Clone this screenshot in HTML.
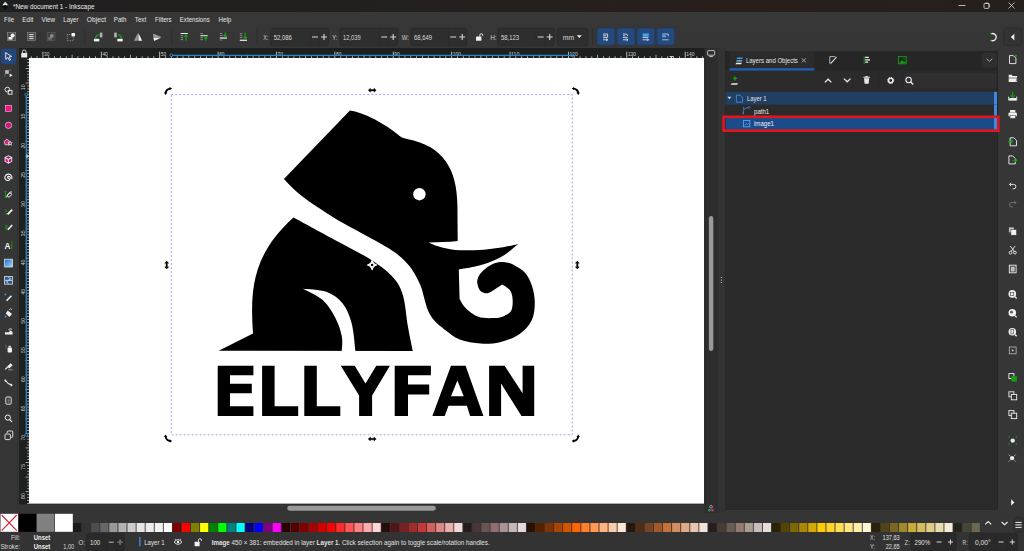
<!DOCTYPE html>
<html><head><meta charset="utf-8">
<style>
*{margin:0;padding:0}
html,body{width:1024px;height:551px;overflow:hidden;background:#363636;font-family:"Liberation Sans",sans-serif}
svg{position:absolute;left:0;top:0;display:block}
text{font-family:"Liberation Sans",sans-serif}
</style></head><body><svg width="1024" height="551" viewBox="0 0 1024 551" font-family="Liberation Sans, sans-serif"><defs><linearGradient id="tg" x1="0" x2="1" y1="0" y2="0"><stop offset="0" stop-color="#201f1f"/><stop offset="0.5" stop-color="#23201e"/><stop offset="0.72" stop-color="#281e1c"/><stop offset="1" stop-color="#24201e"/></linearGradient></defs><rect x="0" y="0" width="1024" height="12" fill="url(#tg)" rx="0" /><path d="M5.2,1.8 L9,5.6 L5.2,9.8 L1.6,5.6 Z" fill="#0a0a0a"/><path d="M5.2,1.8 L8.2,4.8 L6.6,5.4 L5.4,4.8 L3.6,5.6 L2.2,5.2 Z" fill="#e8e8e8"/><path d="M6.2,2.8 L9,5.6 L7.6,5.8 Z" fill="#5078b0"/><text x="12.9" y="8.9" font-size="7.4" fill="#eeeeee" text-anchor="start" font-weight="normal" textLength="81.6" lengthAdjust="spacingAndGlyphs" >*New document 1 - Inkscape</text><rect x="958.5" y="5.2" width="7" height="0.8" fill="#e0e0e0" rx="0" /><rect x="984" y="3.4" width="5" height="5" rx="1" fill="none" stroke="#e0e0e0" stroke-width="0.8"/><path d="M985.5,3.2 h2.5 a1.2,1.2 0 0 1 1.2,1.2 v2.5" fill="none" stroke="#e0e0e0" stroke-width="0.8"/><path d="M1008.5,2.5 L1014.5,8.5 M1014.5,2.5 L1008.5,8.5" stroke="#e0e0e0" stroke-width="0.8"/><rect x="0" y="12" width="1024" height="36" fill="#363636" rx="0" /><rect x="0" y="12" width="1024" height="13" fill="#373737" rx="0" /><text x="4.1" y="21.6" font-size="7.5" fill="#e6e6e6" text-anchor="start" font-weight="normal" textLength="10.0" lengthAdjust="spacingAndGlyphs" >File</text><text x="22.3" y="21.6" font-size="7.5" fill="#e6e6e6" text-anchor="start" font-weight="normal" textLength="11.1" lengthAdjust="spacingAndGlyphs" >Edit</text><text x="41.6" y="21.6" font-size="7.5" fill="#e6e6e6" text-anchor="start" font-weight="normal" textLength="13.5" lengthAdjust="spacingAndGlyphs" >View</text><text x="63.3" y="21.6" font-size="7.5" fill="#e6e6e6" text-anchor="start" font-weight="normal" textLength="15.2" lengthAdjust="spacingAndGlyphs" >Layer</text><text x="86.8" y="21.6" font-size="7.5" fill="#e6e6e6" text-anchor="start" font-weight="normal" textLength="19.3" lengthAdjust="spacingAndGlyphs" >Object</text><text x="113.8" y="21.6" font-size="7.5" fill="#e6e6e6" text-anchor="start" font-weight="normal" textLength="12.7" lengthAdjust="spacingAndGlyphs" >Path</text><text x="134.8" y="21.6" font-size="7.5" fill="#e6e6e6" text-anchor="start" font-weight="normal" textLength="11.4" lengthAdjust="spacingAndGlyphs" >Text</text><text x="155.1" y="21.6" font-size="7.5" fill="#e6e6e6" text-anchor="start" font-weight="normal" textLength="16.5" lengthAdjust="spacingAndGlyphs" >Filters</text><text x="179.8" y="21.6" font-size="7.5" fill="#e6e6e6" text-anchor="start" font-weight="normal" textLength="29.9" lengthAdjust="spacingAndGlyphs" >Extensions</text><text x="218.5" y="21.6" font-size="7.5" fill="#e6e6e6" text-anchor="start" font-weight="normal" textLength="12.7" lengthAdjust="spacingAndGlyphs" >Help</text><rect x="84.4" y="29" width="0.7" height="16" fill="#2c2c2c" rx="0" /><rect x="171.4" y="29" width="0.7" height="16" fill="#2c2c2c" rx="0" /><rect x="256.6" y="29" width="0.7" height="16" fill="#2c2c2c" rx="0" /><rect x="592.4" y="29" width="0.7" height="16" fill="#2c2c2c" rx="0" /><rect x="7.3" y="32.5" width="8.4" height="8" fill="#4a4a4a" stroke="#8a8a8a" stroke-width="0.6"/><circle cx="12.6" cy="35.6" r="2" fill="#f0f0f0"/><rect x="8.5" y="37" width="4" height="2.6" fill="#f0f0f0"/><rect x="27.3" y="32.5" width="8.4" height="8" fill="#4a4a4a" stroke="#8a8a8a" stroke-width="0.6"/><path d="M29.2,34.6 h4.4 M29.2,36.6 h4.4 M29.2,38.6 h4.4" stroke="#f0f0f0" stroke-width="0.9"/><rect x="47.2" y="32.5" width="7.8" height="8" fill="#3e3e3e" stroke="#606060" stroke-width="0.6"/><circle cx="51.8" cy="35.8" r="1.9" fill="#8a8a8a"/><rect x="48.3" y="37.2" width="3.5" height="2.4" fill="#7a7a7a"/><rect x="67.3" y="34.5" width="6" height="6.2" fill="none" stroke="#bdbdbd" stroke-width="0.6" stroke-dasharray="1,0.8"/><rect x="71.6" y="33" width="3.4" height="3.4" fill="#f2f2f2"/><path d="M95.6,38.4 a3.4,3.4 0 0 1 3.4,-3.4" fill="none" stroke="#10a010" stroke-width="1.7"/><rect x="99.8" y="32.6" width="2.6" height="4.8" fill="#b0b0b0"/><rect x="93.9" y="38.8" width="5.4" height="2.6" fill="#f0f0f0"/><path d="M121.4,38.4 a3.4,3.4 0 0 0 -3.4,-3.4" fill="none" stroke="#10a010" stroke-width="1.7"/><rect x="114.2" y="32.6" width="2.6" height="4.8" fill="#b0b0b0"/><rect x="117.3" y="38.8" width="5.4" height="2.6" fill="#f0f0f0"/><path d="M137.8,33 L134,40.8 H137.8 Z" fill="#9a9a9a"/><path d="M138.4,33 L142.2,40.8 H138.4 Z" fill="#f0f0f0"/><path d="M153.2,33.6 L161.4,37 L153.2,37 Z" fill="#9a9a9a"/><path d="M153.2,37.6 L161.4,37.6 L154.2,41 Z" fill="#f0f0f0"/><rect x="180.6" y="33" width="7.2" height="1" fill="#f0f0f0" rx="0" /><rect x="180.6" y="35.3" width="2.6" height="0.8" fill="#9a9a9a" rx="0" /><rect x="180.6" y="37.3" width="2.6" height="0.8" fill="#9a9a9a" rx="0" /><rect x="180.6" y="39.3" width="2.6" height="0.8" fill="#9a9a9a" rx="0" /><path d="M186.0,40.8 V35.3 M184.4,36.8 L186.0,35 L187.6,36.8" stroke="#10a010" stroke-width="1.2" fill="none"/><rect x="200.4" y="33" width="2.6" height="0.8" fill="#9a9a9a" rx="0" /><rect x="200.4" y="35.2" width="7.2" height="1" fill="#f0f0f0" rx="0" /><rect x="200.4" y="37.3" width="2.6" height="0.8" fill="#9a9a9a" rx="0" /><rect x="200.4" y="39.3" width="2.6" height="0.8" fill="#9a9a9a" rx="0" /><path d="M205.8,40.8 V37 M204.20000000000002,38.5 L205.8,36.8 L207.4,38.5" stroke="#10a010" stroke-width="1.2" fill="none"/><rect x="219.8" y="33" width="2.6" height="0.8" fill="#9a9a9a" rx="0" /><rect x="219.8" y="35" width="2.6" height="0.8" fill="#9a9a9a" rx="0" /><rect x="219.8" y="37.4" width="7.2" height="1.2" fill="#f0f0f0" rx="0" /><rect x="219.8" y="39.6" width="2.6" height="0.8" fill="#9a9a9a" rx="0" /><path d="M225.20000000000002,32.5 V36.6 M223.60000000000002,35 L225.20000000000002,36.8 L226.8,35" stroke="#10a010" stroke-width="1.2" fill="none"/><rect x="239.8" y="33" width="2.6" height="0.8" fill="#9a9a9a" rx="0" /><rect x="239.8" y="35" width="2.6" height="0.8" fill="#9a9a9a" rx="0" /><rect x="239.8" y="37" width="2.6" height="0.8" fill="#9a9a9a" rx="0" /><rect x="239.8" y="39.6" width="7.2" height="1.4" fill="#d8d8d8" rx="0" /><path d="M245.20000000000002,32.5 V38.6 M243.60000000000002,37 L245.20000000000002,38.8 L246.8,37" stroke="#10a010" stroke-width="1.2" fill="none"/><text x="263.3" y="39.8" font-size="6.8" fill="#d0d0d0" text-anchor="start" font-weight="normal" textLength="5" lengthAdjust="spacingAndGlyphs" >X:</text><rect x="270.3" y="28.1" width="58.3" height="17.7" fill="#2e2e2e" rx="2.5" stroke="#282828" stroke-width="0.6"/><rect x="310.0" y="28.4" width="0.6" height="17.1" fill="#282828" rx="0" /><rect x="319.0" y="28.4" width="0.6" height="17.1" fill="#2a2a2a" rx="0" /><text x="273.7" y="39.8" font-size="6.8" fill="#dcdcdc" text-anchor="start" font-weight="normal" textLength="18.2" lengthAdjust="spacingAndGlyphs" >52,086</text><path d="M312.0,37 h6 M321.0,37 h6 M324.0,34 v6" stroke="#d8d8d8" stroke-width="1.1"/><text x="332.3" y="39.8" font-size="6.8" fill="#d0d0d0" text-anchor="start" font-weight="normal" textLength="5" lengthAdjust="spacingAndGlyphs" >Y:</text><rect x="339.7" y="28.1" width="58.1" height="17.7" fill="#2e2e2e" rx="2.5" stroke="#282828" stroke-width="0.6"/><rect x="379.2" y="28.4" width="0.6" height="17.1" fill="#282828" rx="0" /><rect x="388.2" y="28.4" width="0.6" height="17.1" fill="#2a2a2a" rx="0" /><text x="343.09999999999997" y="39.8" font-size="6.8" fill="#dcdcdc" text-anchor="start" font-weight="normal" textLength="17.5" lengthAdjust="spacingAndGlyphs" >12,039</text><path d="M381.2,37 h6 M390.2,37 h6 M393.2,34 v6" stroke="#d8d8d8" stroke-width="1.1"/><text x="401.8" y="39.8" font-size="6.8" fill="#d0d0d0" text-anchor="start" font-weight="normal" textLength="7.2" lengthAdjust="spacingAndGlyphs" >W:</text><rect x="410.7" y="28.1" width="56.1" height="17.7" fill="#2e2e2e" rx="2.5" stroke="#282828" stroke-width="0.6"/><rect x="448.2" y="28.4" width="0.6" height="17.1" fill="#282828" rx="0" /><rect x="457.2" y="28.4" width="0.6" height="17.1" fill="#2a2a2a" rx="0" /><text x="414.09999999999997" y="39.8" font-size="6.8" fill="#dcdcdc" text-anchor="start" font-weight="normal" textLength="18" lengthAdjust="spacingAndGlyphs" >68,649</text><path d="M450.2,37 h6 M459.2,37 h6 M462.2,34 v6" stroke="#d8d8d8" stroke-width="1.1"/><text x="490.2" y="39.8" font-size="6.8" fill="#d0d0d0" text-anchor="start" font-weight="normal" textLength="6.5" lengthAdjust="spacingAndGlyphs" >H:</text><rect x="497.7" y="28.1" width="56.6" height="17.7" fill="#2e2e2e" rx="2.5" stroke="#282828" stroke-width="0.6"/><rect x="535.6999999999999" y="28.4" width="0.6" height="17.1" fill="#282828" rx="0" /><rect x="544.6999999999999" y="28.4" width="0.6" height="17.1" fill="#2a2a2a" rx="0" /><text x="501.09999999999997" y="39.8" font-size="6.8" fill="#dcdcdc" text-anchor="start" font-weight="normal" textLength="17.9" lengthAdjust="spacingAndGlyphs" >58,123</text><path d="M537.6999999999999,37 h6 M546.6999999999999,37 h6 M549.6999999999999,34 v6" stroke="#d8d8d8" stroke-width="1.1"/><rect x="476" y="36.6" width="5.4" height="4.2" rx="0.5" fill="#f0f0f0"/><path d="M479.8,36.8 V35.2 a1.5,1.5 0 0 1 3,0 V36" fill="none" stroke="#f0f0f0" stroke-width="0.9"/><rect x="557.2" y="28.1" width="30.7" height="17.7" fill="#2e2e2e" rx="2.5" stroke="#282828" stroke-width="0.6"/><text x="562.8" y="40" font-size="6.8" fill="#d8d8d8" text-anchor="start" font-weight="normal" >mm</text><path d="M576.8,35.2 h5 l-2.5,2.8 z" fill="#f0f0f0"/><rect x="597" y="28.1" width="17.9" height="17" fill="#24497c" rx="2.8" stroke="#1c3a62" stroke-width="0.5"/><rect x="617" y="28.1" width="17.9" height="17" fill="#24497c" rx="2.8" stroke="#1c3a62" stroke-width="0.5"/><rect x="637" y="28.1" width="17.9" height="17" fill="#24497c" rx="2.8" stroke="#1c3a62" stroke-width="0.5"/><rect x="656.7" y="28.1" width="17.9" height="17" fill="#24497c" rx="2.8" stroke="#1c3a62" stroke-width="0.5"/><path d="M603,34 h4.6 v3.4 M603,35.8 h3.2 M603,37.6 h4.6 M603,39.8 h5 M607.6,39.8 l-1.4,-1 M607.6,39.8 l-1.4,1" stroke="#f0f0f0" stroke-width="0.8" fill="none"/><path d="M623,34 h2.6 a2.2,2.2 0 0 1 2.2,2.2 M623,35.8 h2.2 M623,37.6 h4.6 M623,39.8 h5 M628,39.8 l-1.4,-1 M628,39.8 l-1.4,1" stroke="#f0f0f0" stroke-width="0.8" fill="none"/><rect x="642.6" y="33.4" width="6.2" height="3.4" fill="#3ea0f0"/><path d="M642.6,37.6 h5.8 M642.6,39.8 h6 M648.6,39.8 l-1.4,-1 M648.6,39.8 l-1.4,1" stroke="#f0f0f0" stroke-width="0.8" fill="none"/><path d="M662.2,34 h6 v2.4 M662.2,36.4 h4 M662.2,39.8 h6.4" stroke="#d0e0f0" stroke-width="0.8" fill="none"/><rect x="662.2" y="34.8" width="3" height="2.6" fill="#3ea0f0"/><path d="M991.2,33.8 a3.6,3.6 0 1 1 0,6.6" fill="none" stroke="#f0f0f0" stroke-width="1.3"/><circle cx="990.6" cy="33.4" r="0.8" fill="#10a010"/><circle cx="990.6" cy="40.6" r="0.8" fill="#10a010"/><rect x="1003.7" y="28.1" width="18" height="17.3" fill="#333333" rx="2.5" stroke="#2a2a2a" stroke-width="0.7"/><path d="M1014.4,33.8 v6.6 l-3.6,-3.3 z" fill="#f0f0f0"/><rect x="0" y="48" width="18" height="465" fill="#363636" rx="0" /><rect x="0.8" y="48.7" width="15.4" height="15.3" fill="#23477a" rx="2.5" /><path d="M5.6,52.6 L11.6,56.4 L9,57 L10.6,59.8 L9.4,60.4 L7.8,57.6 L5.8,59.4 Z" fill="none" stroke="#f4f4f4" stroke-width="0.9" stroke-linejoin="round"/><rect x="5.2" y="70.2" width="3.6" height="3.6" fill="#bdbdbd"/><path d="M5,76.4 V74 M9,70 H11.6" stroke="#bdbdbd" stroke-width="0.6" stroke-dasharray="0.8,0.6"/><path d="M9.6,73.4 L12.6,75.2 L9.6,77 Z" fill="#f0f0f0"/><circle cx="7.4" cy="89.6" r="2.4" fill="none" stroke="#f0f0f0" stroke-width="0.9"/><rect x="8.2" y="90.4" width="3.8" height="3.8" fill="none" stroke="#f0f0f0" stroke-width="0.9"/><rect x="5.4" y="105.3" width="6.2" height="6.1" fill="#ff0a8c" rx="0" stroke="#e8e8e8" stroke-width="0.5"/><circle cx="8.5" cy="125.3" r="3.2" fill="#c8187c" stroke="#e8e8e8" stroke-width="0.6"/><path d="M6.8,139.2 L9.4,141 L8.6,144.6 L5,144.8 L4.2,141.4 Z" fill="#d0207a" stroke="#f0f0f0" stroke-width="0.7"/><path d="M10.2,140.6 L11,142.4 L12.8,142.6 L11.4,143.8 L11.8,145.8 L10.2,144.8 L8.4,145.8 L8.8,143.8 L7.4,142.6 L9.4,142.4 Z" fill="#f2f2f2"/><circle cx="10.1" cy="143.4" r="0.9" fill="#902050"/><path d="M8.4,155.2 L12.2,157.3 V161.6 L8.4,163.7 L4.6,161.6 V157.3 Z" fill="#f0f0f0"/><path d="M8.4,156.2 L10.8,157.5 L8.4,158.8 L6,157.5 Z" fill="#6a2848"/><path d="M5.4,158.3 L8,159.7 V162.6 L5.4,161.2 Z" fill="#ff10a0"/><path d="M8.8,159.7 L11.4,158.3 V161.2 L8.8,162.6 Z" fill="#b01868"/><path d="M9.2,178.2 a1.1,1.1 0 0 1 -1.6,-1.4 a1.6,1.6 0 0 1 2.6,0.6 a2.6,2.6 0 0 1 -3.2,3 a3.4,3.4 0 0 1 -1.8,-4.4 a3.6,3.6 0 0 1 6.6,0.6 v2.6" fill="none" stroke="#f0f0f0" stroke-width="1.1"/><path d="M6.4,197.4 C8,193 10.5,191.5 12,192" fill="none" stroke="#f0f0f0" stroke-width="1"/><ellipse cx="9.5" cy="195" rx="2.4" ry="1.5" transform="rotate(-45 9.5 195)" fill="none" stroke="#f0f0f0" stroke-width="0.9"/><path d="M5.4,191.4 V198" stroke="#10a010" stroke-width="0.9"/><circle cx="5.4" cy="191.6" r="0.9" fill="#10a010"/><circle cx="5.6" cy="197.2" r="0.9" fill="#10a010"/><path d="M7.6,214.4 L12.2,209.6" stroke="#f0f0f0" stroke-width="1.8"/><path d="M5,209.6 L6.8,210.4 M5.4,212.4 L7,211 M6,215 L6.6,213" stroke="#10a010" stroke-width="1"/><path d="M7.8,229.8 L12.2,225" stroke="#f0f0f0" stroke-width="1.6"/><path d="M5.2,225.6 L7.4,225.6 L5.4,228 L7.6,228.2 L5.6,230.4" fill="none" stroke="#10a010" stroke-width="0.9"/><text x="4.4" y="248.6" font-size="8.2" fill="#f4f4f4" text-anchor="start" font-weight="bold" >A</text><rect x="11.4" y="241.2" width="0.9" height="7.8" fill="#10a010" rx="0" /><defs><linearGradient id="gr" x1="0" y1="0" x2="1" y2="1"><stop offset="0" stop-color="#1a6fd0"/><stop offset="1" stop-color="#9fd6ff"/></linearGradient></defs><rect x="4.6" y="259.2" width="7.8" height="7.8" fill="url(#gr)" stroke="#e0e0e0" stroke-width="0.8"/><rect x="4.6" y="276.4" width="7.8" height="7.8" fill="#2b5c90" stroke="#e0e0e0" stroke-width="0.8"/><path d="M8.5,277 L10.5,279 L8.5,280.3 L6.5,282 L8.5,283.6 M5,280.3 L12,280.3" stroke="#e8f4ff" stroke-width="0.8" fill="none"/><path d="M6.6,300.8 L11.4,295.8" stroke="#f0f0f0" stroke-width="1.6"/><circle cx="5.4" cy="294.6" r="1" fill="#2a8fe0"/><path d="M7.8,310.6 L12,314 L9.4,317 L5.8,313.6 Z" fill="#f0f0f0"/><path d="M9,310 L10.8,308.6 L12,310" fill="none" stroke="#f0f0f0" stroke-width="0.7"/><circle cx="5.6" cy="316.6" r="1.1" fill="#2a8fe0"/><path d="M5,334.6 h7.6 v-2.4 c-1,-1.6 -2.6,-2 -3.8,-1.4 c1,0 1.4,1.4 -0.4,1.4 h-3.4 Z" fill="#f0f0f0"/><path d="M8.4,330 c1,-1.6 2.6,-1.4 3.8,-0.6" stroke="#f0f0f0" stroke-width="0.8" fill="none"/><rect x="7.6" y="347.4" width="4.4" height="5.2" rx="0.8" fill="#f0f0f0"/><rect x="8.6" y="345.8" width="2.2" height="1.6" fill="#f0f0f0"/><path d="M5,345.2 h0.6 M6.2,346.4 h0.6 M5,347.6 h0.6" stroke="#bdbdbd" stroke-width="0.6"/><path d="M7.2,366.6 L10.6,363.2 L12.6,365.2 L9.2,368.6 Z" fill="#f0f0f0"/><path d="M5.2,369.4 L7.6,367" stroke="#f0f0f0" stroke-width="1.2"/><path d="M8,369.8 h4.6" stroke="#bdbdbd" stroke-width="0.7"/><path d="M5.2,380.4 L8.6,383.8 L11.8,385" stroke="#f0f0f0" stroke-width="1.1" fill="none"/><circle cx="5.4" cy="380.6" r="1" fill="#f0f0f0"/><path d="M10.6,383.2 L12.8,385.2 L10.6,386.8 Z" fill="#f0f0f0"/><rect x="5.8" y="397" width="5.4" height="7.2" rx="1" fill="none" stroke="#f0f0f0" stroke-width="0.9"/><path d="M7.6,399 h2 M7.6,400.6 h2 M7.6,402.2 h2" stroke="#bdbdbd" stroke-width="0.6"/><circle cx="7.8" cy="417.6" r="2.6" fill="none" stroke="#f0f0f0" stroke-width="1"/><path d="M9.8,419.6 L12,421.8" stroke="#f0f0f0" stroke-width="1.2"/><rect x="5" y="434" width="5.4" height="5.6" rx="1" fill="#363636" stroke="#f0f0f0" stroke-width="0.9"/><path d="M7.2,433 v-1 a1,1 0 0 1 1,-1 h3.6 a1,1 0 0 1 1,1 v4.4 a1,1 0 0 1 -1,1 h-1.2" fill="none" stroke="#f0f0f0" stroke-width="0.9"/><rect x="17.6" y="48" width="0.6" height="465" fill="#2a2a2a" rx="0" /><rect x="18" y="48" width="707" height="465" fill="#353535" rx="0" /><rect x="19" y="503.6" width="686" height="0.8" fill="#262626" rx="0" /><rect x="19" y="48" width="686" height="10" fill="#1e1f1f" rx="0" /><rect x="19" y="58" width="10" height="446" fill="#1e1f1f" rx="0" /><rect x="29" y="58" width="675.5" height="445.6" fill="#ffffff" rx="0" /><rect x="30.82" y="56.2" width="0.8" height="1.8" fill="#c8c8c8" rx="0" /><rect x="36.66" y="56.2" width="0.8" height="1.8" fill="#c8c8c8" rx="0" /><rect x="42.50" y="51.7" width="0.8" height="6.3" fill="#d8d8d8" rx="0" /><text x="44.00" y="55.5" font-size="5.4" fill="#cfcfcf" text-anchor="start" font-weight="normal" textLength="5.4" lengthAdjust="spacingAndGlyphs" >30</text><rect x="48.34" y="56.2" width="0.8" height="1.8" fill="#c8c8c8" rx="0" /><rect x="54.18" y="56.2" width="0.8" height="1.8" fill="#c8c8c8" rx="0" /><rect x="60.02" y="56.2" width="0.8" height="1.8" fill="#c8c8c8" rx="0" /><rect x="65.86" y="56.2" width="0.8" height="1.8" fill="#c8c8c8" rx="0" /><rect x="71.69" y="54.8" width="0.8" height="3.2" fill="#c8c8c8" rx="0" /><rect x="77.53" y="56.2" width="0.8" height="1.8" fill="#c8c8c8" rx="0" /><rect x="83.37" y="56.2" width="0.8" height="1.8" fill="#c8c8c8" rx="0" /><rect x="89.21" y="56.2" width="0.8" height="1.8" fill="#c8c8c8" rx="0" /><rect x="95.05" y="56.2" width="0.8" height="1.8" fill="#c8c8c8" rx="0" /><rect x="100.89" y="51.7" width="0.8" height="6.3" fill="#d8d8d8" rx="0" /><text x="102.39" y="55.5" font-size="5.4" fill="#cfcfcf" text-anchor="start" font-weight="normal" textLength="5.4" lengthAdjust="spacingAndGlyphs" >40</text><rect x="106.73" y="56.2" width="0.8" height="1.8" fill="#c8c8c8" rx="0" /><rect x="112.57" y="56.2" width="0.8" height="1.8" fill="#c8c8c8" rx="0" /><rect x="118.41" y="56.2" width="0.8" height="1.8" fill="#c8c8c8" rx="0" /><rect x="124.25" y="56.2" width="0.8" height="1.8" fill="#c8c8c8" rx="0" /><rect x="130.09" y="54.8" width="0.8" height="3.2" fill="#c8c8c8" rx="0" /><rect x="135.92" y="56.2" width="0.8" height="1.8" fill="#c8c8c8" rx="0" /><rect x="141.76" y="56.2" width="0.8" height="1.8" fill="#c8c8c8" rx="0" /><rect x="147.60" y="56.2" width="0.8" height="1.8" fill="#c8c8c8" rx="0" /><rect x="153.44" y="56.2" width="0.8" height="1.8" fill="#c8c8c8" rx="0" /><rect x="159.28" y="51.7" width="0.8" height="6.3" fill="#d8d8d8" rx="0" /><text x="160.78" y="55.5" font-size="5.4" fill="#cfcfcf" text-anchor="start" font-weight="normal" textLength="5.4" lengthAdjust="spacingAndGlyphs" >50</text><rect x="165.12" y="56.2" width="0.8" height="1.8" fill="#c8c8c8" rx="0" /><rect x="170.96" y="56.2" width="0.8" height="1.8" fill="#c8c8c8" rx="0" /><rect x="176.80" y="56.2" width="0.8" height="1.8" fill="#c8c8c8" rx="0" /><rect x="182.64" y="56.2" width="0.8" height="1.8" fill="#c8c8c8" rx="0" /><rect x="188.48" y="54.8" width="0.8" height="3.2" fill="#c8c8c8" rx="0" /><rect x="194.31" y="56.2" width="0.8" height="1.8" fill="#c8c8c8" rx="0" /><rect x="200.15" y="56.2" width="0.8" height="1.8" fill="#c8c8c8" rx="0" /><rect x="205.99" y="56.2" width="0.8" height="1.8" fill="#c8c8c8" rx="0" /><rect x="211.83" y="56.2" width="0.8" height="1.8" fill="#c8c8c8" rx="0" /><rect x="217.67" y="51.7" width="0.8" height="6.3" fill="#d8d8d8" rx="0" /><text x="219.17" y="55.5" font-size="5.4" fill="#cfcfcf" text-anchor="start" font-weight="normal" textLength="5.4" lengthAdjust="spacingAndGlyphs" >60</text><rect x="223.51" y="56.2" width="0.8" height="1.8" fill="#c8c8c8" rx="0" /><rect x="229.35" y="56.2" width="0.8" height="1.8" fill="#c8c8c8" rx="0" /><rect x="235.19" y="56.2" width="0.8" height="1.8" fill="#c8c8c8" rx="0" /><rect x="241.03" y="56.2" width="0.8" height="1.8" fill="#c8c8c8" rx="0" /><rect x="246.87" y="54.8" width="0.8" height="3.2" fill="#c8c8c8" rx="0" /><rect x="252.70" y="56.2" width="0.8" height="1.8" fill="#c8c8c8" rx="0" /><rect x="258.54" y="56.2" width="0.8" height="1.8" fill="#c8c8c8" rx="0" /><rect x="264.38" y="56.2" width="0.8" height="1.8" fill="#c8c8c8" rx="0" /><rect x="270.22" y="56.2" width="0.8" height="1.8" fill="#c8c8c8" rx="0" /><rect x="276.06" y="51.7" width="0.8" height="6.3" fill="#d8d8d8" rx="0" /><text x="277.56" y="55.5" font-size="5.4" fill="#cfcfcf" text-anchor="start" font-weight="normal" textLength="5.4" lengthAdjust="spacingAndGlyphs" >70</text><rect x="281.90" y="56.2" width="0.8" height="1.8" fill="#c8c8c8" rx="0" /><rect x="287.74" y="56.2" width="0.8" height="1.8" fill="#c8c8c8" rx="0" /><rect x="293.58" y="56.2" width="0.8" height="1.8" fill="#c8c8c8" rx="0" /><rect x="299.42" y="56.2" width="0.8" height="1.8" fill="#c8c8c8" rx="0" /><rect x="305.25" y="54.8" width="0.8" height="3.2" fill="#c8c8c8" rx="0" /><rect x="311.09" y="56.2" width="0.8" height="1.8" fill="#c8c8c8" rx="0" /><rect x="316.93" y="56.2" width="0.8" height="1.8" fill="#c8c8c8" rx="0" /><rect x="322.77" y="56.2" width="0.8" height="1.8" fill="#c8c8c8" rx="0" /><rect x="328.61" y="56.2" width="0.8" height="1.8" fill="#c8c8c8" rx="0" /><rect x="334.45" y="51.7" width="0.8" height="6.3" fill="#d8d8d8" rx="0" /><text x="335.95" y="55.5" font-size="5.4" fill="#cfcfcf" text-anchor="start" font-weight="normal" textLength="5.4" lengthAdjust="spacingAndGlyphs" >80</text><rect x="340.29" y="56.2" width="0.8" height="1.8" fill="#c8c8c8" rx="0" /><rect x="346.13" y="56.2" width="0.8" height="1.8" fill="#c8c8c8" rx="0" /><rect x="351.97" y="56.2" width="0.8" height="1.8" fill="#c8c8c8" rx="0" /><rect x="357.81" y="56.2" width="0.8" height="1.8" fill="#c8c8c8" rx="0" /><rect x="363.65" y="54.8" width="0.8" height="3.2" fill="#c8c8c8" rx="0" /><rect x="369.48" y="56.2" width="0.8" height="1.8" fill="#c8c8c8" rx="0" /><rect x="375.32" y="56.2" width="0.8" height="1.8" fill="#c8c8c8" rx="0" /><rect x="381.16" y="56.2" width="0.8" height="1.8" fill="#c8c8c8" rx="0" /><rect x="387.00" y="56.2" width="0.8" height="1.8" fill="#c8c8c8" rx="0" /><rect x="392.84" y="51.7" width="0.8" height="6.3" fill="#d8d8d8" rx="0" /><text x="394.34" y="55.5" font-size="5.4" fill="#cfcfcf" text-anchor="start" font-weight="normal" textLength="5.4" lengthAdjust="spacingAndGlyphs" >90</text><rect x="398.68" y="56.2" width="0.8" height="1.8" fill="#c8c8c8" rx="0" /><rect x="404.52" y="56.2" width="0.8" height="1.8" fill="#c8c8c8" rx="0" /><rect x="410.36" y="56.2" width="0.8" height="1.8" fill="#c8c8c8" rx="0" /><rect x="416.20" y="56.2" width="0.8" height="1.8" fill="#c8c8c8" rx="0" /><rect x="422.04" y="54.8" width="0.8" height="3.2" fill="#c8c8c8" rx="0" /><rect x="427.87" y="56.2" width="0.8" height="1.8" fill="#c8c8c8" rx="0" /><rect x="433.71" y="56.2" width="0.8" height="1.8" fill="#c8c8c8" rx="0" /><rect x="439.55" y="56.2" width="0.8" height="1.8" fill="#c8c8c8" rx="0" /><rect x="445.39" y="56.2" width="0.8" height="1.8" fill="#c8c8c8" rx="0" /><rect x="451.23" y="51.7" width="0.8" height="6.3" fill="#d8d8d8" rx="0" /><text x="452.73" y="55.5" font-size="5.4" fill="#cfcfcf" text-anchor="start" font-weight="normal" textLength="8.2" lengthAdjust="spacingAndGlyphs" >100</text><rect x="457.07" y="56.2" width="0.8" height="1.8" fill="#c8c8c8" rx="0" /><rect x="462.91" y="56.2" width="0.8" height="1.8" fill="#c8c8c8" rx="0" /><rect x="468.75" y="56.2" width="0.8" height="1.8" fill="#c8c8c8" rx="0" /><rect x="474.59" y="56.2" width="0.8" height="1.8" fill="#c8c8c8" rx="0" /><rect x="480.43" y="54.8" width="0.8" height="3.2" fill="#c8c8c8" rx="0" /><rect x="486.26" y="56.2" width="0.8" height="1.8" fill="#c8c8c8" rx="0" /><rect x="492.10" y="56.2" width="0.8" height="1.8" fill="#c8c8c8" rx="0" /><rect x="497.94" y="56.2" width="0.8" height="1.8" fill="#c8c8c8" rx="0" /><rect x="503.78" y="56.2" width="0.8" height="1.8" fill="#c8c8c8" rx="0" /><rect x="509.62" y="51.7" width="0.8" height="6.3" fill="#d8d8d8" rx="0" /><text x="511.12" y="55.5" font-size="5.4" fill="#cfcfcf" text-anchor="start" font-weight="normal" textLength="8.2" lengthAdjust="spacingAndGlyphs" >110</text><rect x="515.46" y="56.2" width="0.8" height="1.8" fill="#c8c8c8" rx="0" /><rect x="521.30" y="56.2" width="0.8" height="1.8" fill="#c8c8c8" rx="0" /><rect x="527.14" y="56.2" width="0.8" height="1.8" fill="#c8c8c8" rx="0" /><rect x="532.98" y="56.2" width="0.8" height="1.8" fill="#c8c8c8" rx="0" /><rect x="538.82" y="54.8" width="0.8" height="3.2" fill="#c8c8c8" rx="0" /><rect x="544.65" y="56.2" width="0.8" height="1.8" fill="#c8c8c8" rx="0" /><rect x="550.49" y="56.2" width="0.8" height="1.8" fill="#c8c8c8" rx="0" /><rect x="556.33" y="56.2" width="0.8" height="1.8" fill="#c8c8c8" rx="0" /><rect x="562.17" y="56.2" width="0.8" height="1.8" fill="#c8c8c8" rx="0" /><rect x="568.01" y="51.7" width="0.8" height="6.3" fill="#d8d8d8" rx="0" /><text x="569.51" y="55.5" font-size="5.4" fill="#cfcfcf" text-anchor="start" font-weight="normal" textLength="8.2" lengthAdjust="spacingAndGlyphs" >120</text><rect x="573.85" y="56.2" width="0.8" height="1.8" fill="#c8c8c8" rx="0" /><rect x="579.69" y="56.2" width="0.8" height="1.8" fill="#c8c8c8" rx="0" /><rect x="585.53" y="56.2" width="0.8" height="1.8" fill="#c8c8c8" rx="0" /><rect x="591.37" y="56.2" width="0.8" height="1.8" fill="#c8c8c8" rx="0" /><rect x="597.21" y="54.8" width="0.8" height="3.2" fill="#c8c8c8" rx="0" /><rect x="603.04" y="56.2" width="0.8" height="1.8" fill="#c8c8c8" rx="0" /><rect x="608.88" y="56.2" width="0.8" height="1.8" fill="#c8c8c8" rx="0" /><rect x="614.72" y="56.2" width="0.8" height="1.8" fill="#c8c8c8" rx="0" /><rect x="620.56" y="56.2" width="0.8" height="1.8" fill="#c8c8c8" rx="0" /><rect x="626.40" y="51.7" width="0.8" height="6.3" fill="#d8d8d8" rx="0" /><text x="627.90" y="55.5" font-size="5.4" fill="#cfcfcf" text-anchor="start" font-weight="normal" textLength="8.2" lengthAdjust="spacingAndGlyphs" >130</text><rect x="632.24" y="56.2" width="0.8" height="1.8" fill="#c8c8c8" rx="0" /><rect x="638.08" y="56.2" width="0.8" height="1.8" fill="#c8c8c8" rx="0" /><rect x="643.92" y="56.2" width="0.8" height="1.8" fill="#c8c8c8" rx="0" /><rect x="649.76" y="56.2" width="0.8" height="1.8" fill="#c8c8c8" rx="0" /><rect x="655.60" y="54.8" width="0.8" height="3.2" fill="#c8c8c8" rx="0" /><rect x="661.43" y="56.2" width="0.8" height="1.8" fill="#c8c8c8" rx="0" /><rect x="667.27" y="56.2" width="0.8" height="1.8" fill="#c8c8c8" rx="0" /><rect x="673.11" y="56.2" width="0.8" height="1.8" fill="#c8c8c8" rx="0" /><rect x="678.95" y="56.2" width="0.8" height="1.8" fill="#c8c8c8" rx="0" /><rect x="684.79" y="51.7" width="0.8" height="6.3" fill="#d8d8d8" rx="0" /><text x="686.29" y="55.5" font-size="5.4" fill="#cfcfcf" text-anchor="start" font-weight="normal" textLength="8.2" lengthAdjust="spacingAndGlyphs" >140</text><rect x="690.63" y="56.2" width="0.8" height="1.8" fill="#c8c8c8" rx="0" /><rect x="696.47" y="56.2" width="0.8" height="1.8" fill="#c8c8c8" rx="0" /><rect x="702.31" y="56.2" width="0.8" height="1.8" fill="#c8c8c8" rx="0" /><rect x="27.2" y="59.23" width="1.8" height="0.8" fill="#c8c8c8" rx="0" /><rect x="27.2" y="62.15" width="1.8" height="0.8" fill="#c8c8c8" rx="0" /><rect x="27.2" y="65.07" width="1.8" height="0.8" fill="#c8c8c8" rx="0" /><rect x="25.6" y="67.99" width="3.4" height="0.8" fill="#c8c8c8" rx="0" /><rect x="27.2" y="70.91" width="1.8" height="0.8" fill="#c8c8c8" rx="0" /><rect x="27.2" y="73.83" width="1.8" height="0.8" fill="#c8c8c8" rx="0" /><rect x="27.2" y="76.75" width="1.8" height="0.8" fill="#c8c8c8" rx="0" /><rect x="27.2" y="79.67" width="1.8" height="0.8" fill="#c8c8c8" rx="0" /><rect x="25.6" y="82.59" width="3.4" height="0.8" fill="#c8c8c8" rx="0" /><text transform="translate(25.4,84.39) rotate(-90)" font-size="5.2" fill="#cfcfcf" text-anchor="end">10</text><rect x="27.2" y="85.51" width="1.8" height="0.8" fill="#c8c8c8" rx="0" /><rect x="27.2" y="88.43" width="1.8" height="0.8" fill="#c8c8c8" rx="0" /><rect x="27.2" y="91.35" width="1.8" height="0.8" fill="#c8c8c8" rx="0" /><rect x="27.2" y="94.27" width="1.8" height="0.8" fill="#c8c8c8" rx="0" /><rect x="25.6" y="97.19" width="3.4" height="0.8" fill="#c8c8c8" rx="0" /><rect x="27.2" y="100.11" width="1.8" height="0.8" fill="#c8c8c8" rx="0" /><rect x="27.2" y="103.03" width="1.8" height="0.8" fill="#c8c8c8" rx="0" /><rect x="27.2" y="105.95" width="1.8" height="0.8" fill="#c8c8c8" rx="0" /><rect x="27.2" y="108.87" width="1.8" height="0.8" fill="#c8c8c8" rx="0" /><rect x="25.6" y="111.79" width="3.4" height="0.8" fill="#c8c8c8" rx="0" /><text transform="translate(25.4,113.59) rotate(-90)" font-size="5.2" fill="#cfcfcf" text-anchor="end">15</text><rect x="27.2" y="114.70" width="1.8" height="0.8" fill="#c8c8c8" rx="0" /><rect x="27.2" y="117.62" width="1.8" height="0.8" fill="#c8c8c8" rx="0" /><rect x="27.2" y="120.54" width="1.8" height="0.8" fill="#c8c8c8" rx="0" /><rect x="27.2" y="123.46" width="1.8" height="0.8" fill="#c8c8c8" rx="0" /><rect x="25.6" y="126.38" width="3.4" height="0.8" fill="#c8c8c8" rx="0" /><rect x="27.2" y="129.30" width="1.8" height="0.8" fill="#c8c8c8" rx="0" /><rect x="27.2" y="132.22" width="1.8" height="0.8" fill="#c8c8c8" rx="0" /><rect x="27.2" y="135.14" width="1.8" height="0.8" fill="#c8c8c8" rx="0" /><rect x="27.2" y="138.06" width="1.8" height="0.8" fill="#c8c8c8" rx="0" /><rect x="25.6" y="140.98" width="3.4" height="0.8" fill="#c8c8c8" rx="0" /><text transform="translate(25.4,142.78) rotate(-90)" font-size="5.2" fill="#cfcfcf" text-anchor="end">20</text><rect x="27.2" y="143.90" width="1.8" height="0.8" fill="#c8c8c8" rx="0" /><rect x="27.2" y="146.82" width="1.8" height="0.8" fill="#c8c8c8" rx="0" /><rect x="27.2" y="149.74" width="1.8" height="0.8" fill="#c8c8c8" rx="0" /><rect x="27.2" y="152.66" width="1.8" height="0.8" fill="#c8c8c8" rx="0" /><rect x="25.6" y="155.58" width="3.4" height="0.8" fill="#c8c8c8" rx="0" /><rect x="27.2" y="158.50" width="1.8" height="0.8" fill="#c8c8c8" rx="0" /><rect x="27.2" y="161.42" width="1.8" height="0.8" fill="#c8c8c8" rx="0" /><rect x="27.2" y="164.34" width="1.8" height="0.8" fill="#c8c8c8" rx="0" /><rect x="27.2" y="167.26" width="1.8" height="0.8" fill="#c8c8c8" rx="0" /><rect x="25.6" y="170.18" width="3.4" height="0.8" fill="#c8c8c8" rx="0" /><text transform="translate(25.4,171.98) rotate(-90)" font-size="5.2" fill="#cfcfcf" text-anchor="end">25</text><rect x="27.2" y="173.09" width="1.8" height="0.8" fill="#c8c8c8" rx="0" /><rect x="27.2" y="176.01" width="1.8" height="0.8" fill="#c8c8c8" rx="0" /><rect x="27.2" y="178.93" width="1.8" height="0.8" fill="#c8c8c8" rx="0" /><rect x="27.2" y="181.85" width="1.8" height="0.8" fill="#c8c8c8" rx="0" /><rect x="25.6" y="184.77" width="3.4" height="0.8" fill="#c8c8c8" rx="0" /><rect x="27.2" y="187.69" width="1.8" height="0.8" fill="#c8c8c8" rx="0" /><rect x="27.2" y="190.61" width="1.8" height="0.8" fill="#c8c8c8" rx="0" /><rect x="27.2" y="193.53" width="1.8" height="0.8" fill="#c8c8c8" rx="0" /><rect x="27.2" y="196.45" width="1.8" height="0.8" fill="#c8c8c8" rx="0" /><rect x="25.6" y="199.37" width="3.4" height="0.8" fill="#c8c8c8" rx="0" /><text transform="translate(25.4,201.17) rotate(-90)" font-size="5.2" fill="#cfcfcf" text-anchor="end">30</text><rect x="27.2" y="202.29" width="1.8" height="0.8" fill="#c8c8c8" rx="0" /><rect x="27.2" y="205.21" width="1.8" height="0.8" fill="#c8c8c8" rx="0" /><rect x="27.2" y="208.13" width="1.8" height="0.8" fill="#c8c8c8" rx="0" /><rect x="27.2" y="211.05" width="1.8" height="0.8" fill="#c8c8c8" rx="0" /><rect x="25.6" y="213.97" width="3.4" height="0.8" fill="#c8c8c8" rx="0" /><rect x="27.2" y="216.89" width="1.8" height="0.8" fill="#c8c8c8" rx="0" /><rect x="27.2" y="219.81" width="1.8" height="0.8" fill="#c8c8c8" rx="0" /><rect x="27.2" y="222.73" width="1.8" height="0.8" fill="#c8c8c8" rx="0" /><rect x="27.2" y="225.65" width="1.8" height="0.8" fill="#c8c8c8" rx="0" /><rect x="25.6" y="228.56" width="3.4" height="0.8" fill="#c8c8c8" rx="0" /><text transform="translate(25.4,230.37) rotate(-90)" font-size="5.2" fill="#cfcfcf" text-anchor="end">35</text><rect x="27.2" y="231.48" width="1.8" height="0.8" fill="#c8c8c8" rx="0" /><rect x="27.2" y="234.40" width="1.8" height="0.8" fill="#c8c8c8" rx="0" /><rect x="27.2" y="237.32" width="1.8" height="0.8" fill="#c8c8c8" rx="0" /><rect x="27.2" y="240.24" width="1.8" height="0.8" fill="#c8c8c8" rx="0" /><rect x="25.6" y="243.16" width="3.4" height="0.8" fill="#c8c8c8" rx="0" /><rect x="27.2" y="246.08" width="1.8" height="0.8" fill="#c8c8c8" rx="0" /><rect x="27.2" y="249.00" width="1.8" height="0.8" fill="#c8c8c8" rx="0" /><rect x="27.2" y="251.92" width="1.8" height="0.8" fill="#c8c8c8" rx="0" /><rect x="27.2" y="254.84" width="1.8" height="0.8" fill="#c8c8c8" rx="0" /><rect x="25.6" y="257.76" width="3.4" height="0.8" fill="#c8c8c8" rx="0" /><text transform="translate(25.4,259.56) rotate(-90)" font-size="5.2" fill="#cfcfcf" text-anchor="end">40</text><rect x="27.2" y="260.68" width="1.8" height="0.8" fill="#c8c8c8" rx="0" /><rect x="27.2" y="263.60" width="1.8" height="0.8" fill="#c8c8c8" rx="0" /><rect x="27.2" y="266.52" width="1.8" height="0.8" fill="#c8c8c8" rx="0" /><rect x="27.2" y="269.44" width="1.8" height="0.8" fill="#c8c8c8" rx="0" /><rect x="25.6" y="272.36" width="3.4" height="0.8" fill="#c8c8c8" rx="0" /><rect x="27.2" y="275.28" width="1.8" height="0.8" fill="#c8c8c8" rx="0" /><rect x="27.2" y="278.20" width="1.8" height="0.8" fill="#c8c8c8" rx="0" /><rect x="27.2" y="281.12" width="1.8" height="0.8" fill="#c8c8c8" rx="0" /><rect x="27.2" y="284.04" width="1.8" height="0.8" fill="#c8c8c8" rx="0" /><rect x="25.6" y="286.95" width="3.4" height="0.8" fill="#c8c8c8" rx="0" /><text transform="translate(25.4,288.75) rotate(-90)" font-size="5.2" fill="#cfcfcf" text-anchor="end">45</text><rect x="27.2" y="289.87" width="1.8" height="0.8" fill="#c8c8c8" rx="0" /><rect x="27.2" y="292.79" width="1.8" height="0.8" fill="#c8c8c8" rx="0" /><rect x="27.2" y="295.71" width="1.8" height="0.8" fill="#c8c8c8" rx="0" /><rect x="27.2" y="298.63" width="1.8" height="0.8" fill="#c8c8c8" rx="0" /><rect x="25.6" y="301.55" width="3.4" height="0.8" fill="#c8c8c8" rx="0" /><rect x="27.2" y="304.47" width="1.8" height="0.8" fill="#c8c8c8" rx="0" /><rect x="27.2" y="307.39" width="1.8" height="0.8" fill="#c8c8c8" rx="0" /><rect x="27.2" y="310.31" width="1.8" height="0.8" fill="#c8c8c8" rx="0" /><rect x="27.2" y="313.23" width="1.8" height="0.8" fill="#c8c8c8" rx="0" /><rect x="25.6" y="316.15" width="3.4" height="0.8" fill="#c8c8c8" rx="0" /><text transform="translate(25.4,317.95) rotate(-90)" font-size="5.2" fill="#cfcfcf" text-anchor="end">50</text><rect x="27.2" y="319.07" width="1.8" height="0.8" fill="#c8c8c8" rx="0" /><rect x="27.2" y="321.99" width="1.8" height="0.8" fill="#c8c8c8" rx="0" /><rect x="27.2" y="324.91" width="1.8" height="0.8" fill="#c8c8c8" rx="0" /><rect x="27.2" y="327.83" width="1.8" height="0.8" fill="#c8c8c8" rx="0" /><rect x="25.6" y="330.75" width="3.4" height="0.8" fill="#c8c8c8" rx="0" /><rect x="27.2" y="333.67" width="1.8" height="0.8" fill="#c8c8c8" rx="0" /><rect x="27.2" y="336.59" width="1.8" height="0.8" fill="#c8c8c8" rx="0" /><rect x="27.2" y="339.51" width="1.8" height="0.8" fill="#c8c8c8" rx="0" /><rect x="27.2" y="342.43" width="1.8" height="0.8" fill="#c8c8c8" rx="0" /><rect x="25.6" y="345.35" width="3.4" height="0.8" fill="#c8c8c8" rx="0" /><text transform="translate(25.4,347.15) rotate(-90)" font-size="5.2" fill="#cfcfcf" text-anchor="end">55</text><rect x="27.2" y="348.26" width="1.8" height="0.8" fill="#c8c8c8" rx="0" /><rect x="27.2" y="351.18" width="1.8" height="0.8" fill="#c8c8c8" rx="0" /><rect x="27.2" y="354.10" width="1.8" height="0.8" fill="#c8c8c8" rx="0" /><rect x="27.2" y="357.02" width="1.8" height="0.8" fill="#c8c8c8" rx="0" /><rect x="25.6" y="359.94" width="3.4" height="0.8" fill="#c8c8c8" rx="0" /><rect x="27.2" y="362.86" width="1.8" height="0.8" fill="#c8c8c8" rx="0" /><rect x="27.2" y="365.78" width="1.8" height="0.8" fill="#c8c8c8" rx="0" /><rect x="27.2" y="368.70" width="1.8" height="0.8" fill="#c8c8c8" rx="0" /><rect x="27.2" y="371.62" width="1.8" height="0.8" fill="#c8c8c8" rx="0" /><rect x="25.6" y="374.54" width="3.4" height="0.8" fill="#c8c8c8" rx="0" /><text transform="translate(25.4,376.34) rotate(-90)" font-size="5.2" fill="#cfcfcf" text-anchor="end">60</text><rect x="27.2" y="377.46" width="1.8" height="0.8" fill="#c8c8c8" rx="0" /><rect x="27.2" y="380.38" width="1.8" height="0.8" fill="#c8c8c8" rx="0" /><rect x="27.2" y="383.30" width="1.8" height="0.8" fill="#c8c8c8" rx="0" /><rect x="27.2" y="386.22" width="1.8" height="0.8" fill="#c8c8c8" rx="0" /><rect x="25.6" y="389.14" width="3.4" height="0.8" fill="#c8c8c8" rx="0" /><rect x="27.2" y="392.06" width="1.8" height="0.8" fill="#c8c8c8" rx="0" /><rect x="27.2" y="394.98" width="1.8" height="0.8" fill="#c8c8c8" rx="0" /><rect x="27.2" y="397.90" width="1.8" height="0.8" fill="#c8c8c8" rx="0" /><rect x="27.2" y="400.82" width="1.8" height="0.8" fill="#c8c8c8" rx="0" /><rect x="25.6" y="403.74" width="3.4" height="0.8" fill="#c8c8c8" rx="0" /><text transform="translate(25.4,405.54) rotate(-90)" font-size="5.2" fill="#cfcfcf" text-anchor="end">65</text><rect x="27.2" y="406.65" width="1.8" height="0.8" fill="#c8c8c8" rx="0" /><rect x="27.2" y="409.57" width="1.8" height="0.8" fill="#c8c8c8" rx="0" /><rect x="27.2" y="412.49" width="1.8" height="0.8" fill="#c8c8c8" rx="0" /><rect x="27.2" y="415.41" width="1.8" height="0.8" fill="#c8c8c8" rx="0" /><rect x="25.6" y="418.33" width="3.4" height="0.8" fill="#c8c8c8" rx="0" /><rect x="27.2" y="421.25" width="1.8" height="0.8" fill="#c8c8c8" rx="0" /><rect x="27.2" y="424.17" width="1.8" height="0.8" fill="#c8c8c8" rx="0" /><rect x="27.2" y="427.09" width="1.8" height="0.8" fill="#c8c8c8" rx="0" /><rect x="27.2" y="430.01" width="1.8" height="0.8" fill="#c8c8c8" rx="0" /><rect x="25.6" y="432.93" width="3.4" height="0.8" fill="#c8c8c8" rx="0" /><text transform="translate(25.4,434.73) rotate(-90)" font-size="5.2" fill="#cfcfcf" text-anchor="end">70</text><rect x="27.2" y="435.85" width="1.8" height="0.8" fill="#c8c8c8" rx="0" /><rect x="27.2" y="438.77" width="1.8" height="0.8" fill="#c8c8c8" rx="0" /><rect x="27.2" y="441.69" width="1.8" height="0.8" fill="#c8c8c8" rx="0" /><rect x="27.2" y="444.61" width="1.8" height="0.8" fill="#c8c8c8" rx="0" /><rect x="25.6" y="447.53" width="3.4" height="0.8" fill="#c8c8c8" rx="0" /><rect x="27.2" y="450.45" width="1.8" height="0.8" fill="#c8c8c8" rx="0" /><rect x="27.2" y="453.37" width="1.8" height="0.8" fill="#c8c8c8" rx="0" /><rect x="27.2" y="456.29" width="1.8" height="0.8" fill="#c8c8c8" rx="0" /><rect x="27.2" y="459.21" width="1.8" height="0.8" fill="#c8c8c8" rx="0" /><rect x="25.6" y="462.12" width="3.4" height="0.8" fill="#c8c8c8" rx="0" /><text transform="translate(25.4,463.93) rotate(-90)" font-size="5.2" fill="#cfcfcf" text-anchor="end">75</text><rect x="27.2" y="465.04" width="1.8" height="0.8" fill="#c8c8c8" rx="0" /><rect x="27.2" y="467.96" width="1.8" height="0.8" fill="#c8c8c8" rx="0" /><rect x="27.2" y="470.88" width="1.8" height="0.8" fill="#c8c8c8" rx="0" /><rect x="27.2" y="473.80" width="1.8" height="0.8" fill="#c8c8c8" rx="0" /><rect x="25.6" y="476.72" width="3.4" height="0.8" fill="#c8c8c8" rx="0" /><rect x="27.2" y="479.64" width="1.8" height="0.8" fill="#c8c8c8" rx="0" /><rect x="27.2" y="482.56" width="1.8" height="0.8" fill="#c8c8c8" rx="0" /><rect x="27.2" y="485.48" width="1.8" height="0.8" fill="#c8c8c8" rx="0" /><rect x="27.2" y="488.40" width="1.8" height="0.8" fill="#c8c8c8" rx="0" /><rect x="25.6" y="491.32" width="3.4" height="0.8" fill="#c8c8c8" rx="0" /><text transform="translate(25.4,493.12) rotate(-90)" font-size="5.2" fill="#cfcfcf" text-anchor="end">80</text><rect x="27.2" y="494.24" width="1.8" height="0.8" fill="#c8c8c8" rx="0" /><rect x="27.2" y="497.16" width="1.8" height="0.8" fill="#c8c8c8" rx="0" /><rect x="27.2" y="500.08" width="1.8" height="0.8" fill="#c8c8c8" rx="0" /><rect x="27.2" y="503.00" width="1.8" height="0.8" fill="#c8c8c8" rx="0" /><path d="M172.6,55.3 H570.8" stroke="#1e8ad2" stroke-width="1.2"/><circle cx="171.3" cy="55.3" r="1.4" fill="none" stroke="#2a8fd0" stroke-width="0.9"/><circle cx="572.2" cy="55.3" r="1.4" fill="none" stroke="#2a8fd0" stroke-width="0.9"/><path d="M26.3,95.9 V433.4" stroke="#1e8ad2" stroke-width="1.3"/><circle cx="26.3" cy="94.5" r="1.4" fill="none" stroke="#2a8fd0" stroke-width="0.9"/><circle cx="26.3" cy="434.8" r="1.4" fill="none" stroke="#2a8fd0" stroke-width="0.9"/><path d="M669.6,56.6 h3.6 M671.4,56.6 V58" stroke="#f0f0f0" stroke-width="0.9"/><path d="M27,154.4 v3.6 M27,156.2 H29" stroke="#f0f0f0" stroke-width="0.9"/><rect x="21.2" y="53" width="6" height="4.6" rx="0.6" fill="#e8e8e8"/><path d="M22.4,53.2 V51.8 a1.8,1.8 0 0 1 3.6,0 V53.2" fill="none" stroke="#e8e8e8" stroke-width="0.9"/><rect x="704.5" y="48" width="13.5" height="465" fill="#2d2d2d" rx="0" /><rect x="704.2" y="58" width="1.2" height="446" fill="#222222" rx="0" /><rect x="718" y="48" width="7.4" height="465" fill="#333333" rx="0" /><rect x="725.4" y="51" width="1" height="458.5" fill="#262626" rx="0" /><rect x="287.3" y="505.8" width="148.5" height="4.9" fill="#9a9a9a" rx="2.4" /><rect x="708.9" y="216" width="4.4" height="135" fill="#9a9a9a" rx="2.2" /><circle cx="721.4" cy="277.5" r="0.6" fill="#cfcfcf"/><circle cx="721.4" cy="280" r="0.6" fill="#cfcfcf"/><circle cx="721.4" cy="282.5" r="0.6" fill="#cfcfcf"/><rect x="725" y="51" width="272.7" height="458.3" fill="#2b2b2b" rx="0" /><rect x="997.2" y="51" width="0.8" height="458.3" fill="#232323" rx="0" /><rect x="725" y="51" width="272.7" height="19.2" fill="#262626" rx="0" /><rect x="729.5" y="51" width="84.8" height="19.2" fill="#2b2b2b" rx="0" /><rect x="729.5" y="68.2" width="84.8" height="2.4" fill="#1f5fb0" rx="0" /><path d="M737.4,57.6 h5.6 l-1,1.4 h-5.6 z" fill="#3aa0e8"/><path d="M737,60.2 h5.6 l-1,1.4 h-5.6 z" fill="#8ccaf4"/><path d="M736.4,62.8 h5.6 l-1,1.4 h-5.6 z" fill="#f0f0f0"/><text x="745.9" y="62.9" font-size="7.2" fill="#e6e6e6" text-anchor="start" font-weight="normal" textLength="52" lengthAdjust="spacingAndGlyphs" >Layers and Objects</text><path d="M801.8,58.4 l4,4 M805.8,58.4 l-4,4" stroke="#c8c8c8" stroke-width="0.8"/><path d="M829.8,56.6 h5.6 M829.8,56.6 v7" stroke="#d8d8d8" stroke-width="0.8" fill="none"/><path d="M830.8,63.4 L836.6,57" stroke="#e8e8e8" stroke-width="1.1"/><circle cx="830.6" cy="63.6" r="0.8" fill="#2a8fe0"/><path d="M864.2,56.4 v7.6" stroke="#10a010" stroke-width="0.9"/><path d="M865.2,57.4 h3.6 M865.2,59.8 h4.8 M865.2,62.2 h3" stroke="#f0f0f0" stroke-width="1.3"/><rect x="898.5" y="56.6" width="7.8" height="7.2" fill="none" stroke="#10a010" stroke-width="0.9"/><path d="M899.4,63.2 l2.6,-3.2 l2,2.2 l1.4,-1.2 v2.2 z" fill="#10a010"/><circle cx="904" cy="58.6" r="0.7" fill="#10a010"/><rect x="981.8" y="52.4" width="15.3" height="15.4" fill="#2f2f2f" rx="2.5" /><path d="M986.6,58.8 l2.8,2.6 l2.8,-2.6" stroke="#bdbdbd" stroke-width="0.9" fill="none"/><path d="M735,76.4 v4 M733,78.4 h4" stroke="#10a010" stroke-width="1.4"/><path d="M731.8,83.2 h6.4 l-1.2,1.6 h-6.4 z" fill="#e8e8e8"/><path d="M824.8,82.4 l3.3,-3.2 l3.3,3.2" stroke="#e8e8e8" stroke-width="1.3" fill="none"/><path d="M843.9,78.6 l3.3,3.2 l3.3,-3.2" stroke="#e8e8e8" stroke-width="1.3" fill="none"/><path d="M864,78.2 h5.2 l-0.6,5.6 h-4 z" fill="#e8e8e8"/><rect x="863.4" y="76.8" width="6.4" height="1" fill="#e8e8e8"/><rect x="865.4" y="76" width="2.4" height="1" fill="#e8e8e8"/><rect x="878.3" y="72" width="0.6" height="17" fill="#262626" rx="0" /><circle cx="890.7" cy="80.5" r="2.2" fill="none" stroke="#ececec" stroke-width="1.5"/><circle cx="890.7" cy="80.5" r="3.1" fill="none" stroke="#ececec" stroke-width="1" stroke-dasharray="1.2,1.23"/><rect x="903.4" y="72.2" width="93.7" height="16.8" fill="#2f2f2f" rx="2.5" stroke="#262626" stroke-width="0.6"/><circle cx="908.6" cy="80" r="2.7" fill="none" stroke="#ececec" stroke-width="1.1"/><path d="M910.6,82 l2.6,2.6" stroke="#ececec" stroke-width="1.4"/><rect x="725.7" y="91.9" width="271.5" height="12.7" fill="#213e63" rx="0" /><rect x="994" y="91.9" width="3" height="12.7" fill="#3f8ae0" rx="0" /><path d="M727.4,96.8 h4 l-2,2.4 z" fill="#d8d8d8"/><path d="M736.4,95.2 h3.8 l2.4,2.4 v4.6 h-6.2 z" fill="none" stroke="#3f8ae0" stroke-width="0.9"/><text x="747" y="100.9" font-size="7" fill="#e6e6e6" text-anchor="start" font-weight="normal" textLength="19.6" lengthAdjust="spacingAndGlyphs" >Layer 1</text><rect x="994" y="104.8" width="3" height="11" fill="#3f8ae0" rx="0" /><path d="M743.2,113.2 C743.2,110 744,108.6 748,107.6 M743.6,107.2 v2.4" stroke="#3f8ae0" stroke-width="0.9" fill="none"/><circle cx="749.2" cy="107.4" r="0.9" fill="none" stroke="#3f8ae0" stroke-width="0.6"/><circle cx="743.4" cy="113.4" r="0.8" fill="#3f8ae0"/><text x="754" y="113.6" font-size="7" fill="#e6e6e6" text-anchor="start" font-weight="normal" textLength="15.2" lengthAdjust="spacingAndGlyphs" >path1</text><rect x="725.7" y="118" width="271.5" height="11.7" fill="#1b4b8a" rx="0" /><rect x="994" y="118" width="3" height="11.7" fill="#3f8ae0" rx="0" /><rect x="743.4" y="120.4" width="6.4" height="6.4" fill="none" stroke="#5aa0f0" stroke-width="0.9"/><path d="M744.6,125.6 l2,-2 l1,1 l1.4,-1.4" stroke="#5aa0f0" stroke-width="0.7" fill="none"/><text x="754" y="126.4" font-size="7" fill="#eeeeee" text-anchor="start" font-weight="normal" textLength="20" lengthAdjust="spacingAndGlyphs" >image1</text><rect x="723.5" y="116.8" width="274.9" height="13.9" fill="none" stroke="#e3151d" stroke-width="2.6"/><path d="M1009.5,55.6 h3.8 l2.6,2.6 v5.4 h-6.4 Z" stroke="#f0f0f0" stroke-width="0.9" fill="none" stroke-linejoin="round"/><circle cx="1015.9000000000001" cy="55.8" r="1.1" fill="#10a010"/><path d="M1008.7,74.8 h3 l1,1.2 h4.4 v6 h-8.4 Z" fill="#f0f0f0"/><path d="M1008.3000000000001,78 h8.8 l-1,3.6" stroke="#363636" stroke-width="0.6" fill="none"/><path d="M1008.7,96.6 v3.6 h8 v-3.6" stroke="#f0f0f0" stroke-width="0.9" fill="none"/><rect x="1009.3000000000001" y="98" width="6.8" height="2" fill="#f0f0f0"/><path d="M1012.7,91.8 v5 M1010.7,95.4 l2,2 l2,-2" stroke="#10a010" stroke-width="1.2" fill="none"/><rect x="1008.5" y="112.4" width="8.4" height="4.2" rx="1" fill="#f0f0f0"/><rect x="1010.1" y="110" width="5.2" height="2.4" fill="#f0f0f0"/><rect x="1010.1" y="115.4" width="5.2" height="3" fill="#f0f0f0" stroke="#363636" stroke-width="0.5"/><path d="M1010.1,137.8 h3.8 l2.6,2.6 v5.4 h-6.4 Z" stroke="#f0f0f0" stroke-width="0.9" fill="none" stroke-linejoin="round"/><path d="M1008.1,141.6 h4.4 M1011.1,140 l1.6,1.6 l-1.6,1.6" stroke="#10a010" stroke-width="1.1" fill="none"/><path d="M1008.9,155.9 h3.8 l2.6,2.6 v5.4 h-6.4 Z" stroke="#f0f0f0" stroke-width="0.9" fill="none" stroke-linejoin="round"/><path d="M1011.7,160.2 h5.2 M1015.3000000000001,158.6 l1.6,1.6 l-1.6,1.6" stroke="#10a010" stroke-width="1.1" fill="none"/><path d="M1009.5,184.4 h4.2 a2.2,2.2 0 0 1 0,4.4 h-1.2 M1011.1,182.8 l-1.6,1.6 l1.6,1.6" stroke="#f0f0f0" stroke-width="0.9" fill="none"/><path d="M1015.9000000000001,202.6 h-4.2 a2.2,2.2 0 0 0 0,4.4 h1.2 M1014.3000000000001,201 l1.6,1.6 l-1.6,1.6" stroke="#7a7a7a" stroke-width="0.9" fill="none"/><rect x="1008.9000000000001" y="227.4" width="5" height="5" fill="#bdbdbd"/><rect x="1010.9000000000001" y="229.6" width="5.6" height="5.6" fill="#f0f0f0" stroke="#363636" stroke-width="0.5"/><path d="M1010.3000000000001,246 L1014.3000000000001,251.6 M1015.1,246 L1011.1,251.6" stroke="#f0f0f0" stroke-width="0.9" fill="none"/><circle cx="1010.5" cy="252.6" r="1.4" stroke="#f0f0f0" stroke-width="0.9" fill="none"/><circle cx="1014.9000000000001" cy="252.6" r="1.4" stroke="#f0f0f0" stroke-width="0.9" fill="none"/><rect x="1009.3000000000001" y="265.2" width="6.8" height="7.6" fill="none" stroke="#f0f0f0" stroke-width="0.9"/><rect x="1010.7" y="266.6" width="4" height="5" fill="#bdbdbd"/><circle cx="1012.3000000000001" cy="293.9" r="3.8" fill="#f0f0f0"/><path d="M1014.9000000000001,296.7 L1016.7,298.5" stroke="#f0f0f0" stroke-width="1.3"/><rect x="1010.5" y="292.3" width="3.2" height="3.2" fill="none" stroke="#555" stroke-width="0.7"/><circle cx="1012.3000000000001" cy="312.79999999999995" r="3.8" fill="#f0f0f0"/><path d="M1014.9000000000001,315.59999999999997 L1016.7,317.4" stroke="#f0f0f0" stroke-width="1.3"/><circle cx="1011.5" cy="312.2" r="1.4" fill="#555"/><circle cx="1012.3000000000001" cy="331.7" r="3.8" fill="#f0f0f0"/><path d="M1014.9000000000001,334.5 L1016.7,336.3" stroke="#f0f0f0" stroke-width="1.3"/><rect x="1010.9000000000001" y="329.5" width="2.4" height="4.4" fill="none" stroke="#555" stroke-width="0.7"/><rect x="1009.3000000000001" y="347" width="6.8" height="6.8" fill="none" stroke="#bdbdbd" stroke-width="0.8"/><path d="M1011.7,350.4 h2 M1012.7,349.4 v2" stroke="#f0f0f0" stroke-width="0.7"/><rect x="1008.9000000000001" y="373.6" width="5" height="5" fill="none" stroke="#f0f0f0" stroke-width="0.9"/><rect x="1011.3000000000001" y="376.2" width="5.6" height="5.4" fill="#10a010"/><rect x="1008.9000000000001" y="391.8" width="5" height="5" fill="none" stroke="#f0f0f0" stroke-width="0.9"/><rect x="1011.3000000000001" y="394.40000000000003" width="5.4" height="5.4" fill="#363636" stroke="#f0f0f0" stroke-width="0.9"/><rect x="1008.9000000000001" y="410.59999999999997" width="5" height="5" fill="none" stroke="#f0f0f0" stroke-width="0.9"/><rect x="1011.3000000000001" y="413.2" width="5.4" height="5.4" fill="#363636" stroke="#f0f0f0" stroke-width="0.9"/><circle cx="1012.7" cy="440.6" r="2.2" fill="#e8e8e8"/><circle cx="1009.1" cy="437" r="0.8" fill="#10a010"/><circle cx="1016.3000000000001" cy="437" r="0.8" fill="#10a010"/><circle cx="1009.1" cy="444.2" r="0.8" fill="#10a010"/><circle cx="1016.3000000000001" cy="444.2" r="0.8" fill="#10a010"/><circle cx="1012.1" cy="458.1" r="2.2" fill="#e8e8e8"/><path d="M1008.7,454.6 l1.4,1.4 M1015.7,454.6 l-1.4,1.4 M1008.7,461.6 l1.4,-1.4 M1015.7,461.6 l-1.4,-1.4" stroke="#bdbdbd" stroke-width="0.8"/><path d="M1011.1,499.2 v6.4 l3.4,-3.2 z" fill="#f0f0f0"/><rect x="0" y="513" width="1024" height="19" fill="#353535" rx="0" /><rect x="725.4" y="509.5" width="272.6" height="3.5" fill="#353535" rx="0" /><rect x="725.4" y="509.2" width="272.3" height="0.8" fill="#262626" rx="0" /><rect x="0.5" y="513.8" width="17.5" height="18" fill="#ffffff" rx="0" /><path d="M1.6,515 L16.8,530.6 M16.8,515 L1.6,530.6" stroke="#d4283c" stroke-width="1.2"/><rect x="18.9" y="513.8" width="17.2" height="18" fill="#000000" rx="0" /><rect x="36.9" y="513.8" width="17.2" height="18" fill="#808080" rx="0" /><rect x="54.9" y="513.8" width="17.9" height="18" fill="#ffffff" rx="0" /><rect x="73.00" y="523" width="8.2" height="9" fill="#1a1a1a" rx="0" /><rect x="82.08" y="523" width="8.2" height="9" fill="#333333" rx="0" /><rect x="91.15" y="523" width="8.2" height="9" fill="#4d4d4d" rx="0" /><rect x="100.23" y="523" width="8.2" height="9" fill="#666666" rx="0" /><rect x="109.31" y="523" width="8.2" height="9" fill="#999999" rx="0" /><rect x="118.38" y="523" width="8.2" height="9" fill="#b3b3b3" rx="0" /><rect x="127.46" y="523" width="8.2" height="9" fill="#cccccc" rx="0" /><rect x="136.54" y="523" width="8.2" height="9" fill="#e6e6e6" rx="0" /><rect x="145.62" y="523" width="8.2" height="9" fill="#ececec" rx="0" /><rect x="154.69" y="523" width="8.2" height="9" fill="#f2f2f2" rx="0" /><rect x="163.77" y="523" width="8.2" height="9" fill="#ffffff" rx="0" /><rect x="172.85" y="523" width="8.2" height="9" fill="#800000" rx="0" /><rect x="181.92" y="523" width="8.2" height="9" fill="#ff0000" rx="0" /><rect x="191.00" y="523" width="8.2" height="9" fill="#808000" rx="0" /><rect x="200.08" y="523" width="8.2" height="9" fill="#ffff00" rx="0" /><rect x="209.16" y="523" width="8.2" height="9" fill="#008000" rx="0" /><rect x="218.23" y="523" width="8.2" height="9" fill="#00ff00" rx="0" /><rect x="227.31" y="523" width="8.2" height="9" fill="#008080" rx="0" /><rect x="236.39" y="523" width="8.2" height="9" fill="#00ffff" rx="0" /><rect x="245.46" y="523" width="8.2" height="9" fill="#000080" rx="0" /><rect x="254.54" y="523" width="8.2" height="9" fill="#0000ff" rx="0" /><rect x="263.62" y="523" width="8.2" height="9" fill="#800080" rx="0" /><rect x="272.69" y="523" width="8.2" height="9" fill="#ff00ff" rx="0" /><rect x="281.77" y="523" width="8.2" height="9" fill="#2b0000" rx="0" /><rect x="290.85" y="523" width="8.2" height="9" fill="#550000" rx="0" /><rect x="299.93" y="523" width="8.2" height="9" fill="#800000" rx="0" /><rect x="309.00" y="523" width="8.2" height="9" fill="#aa0000" rx="0" /><rect x="318.08" y="523" width="8.2" height="9" fill="#d40000" rx="0" /><rect x="327.16" y="523" width="8.2" height="9" fill="#ff0000" rx="0" /><rect x="336.23" y="523" width="8.2" height="9" fill="#ff2a2a" rx="0" /><rect x="345.31" y="523" width="8.2" height="9" fill="#ff5555" rx="0" /><rect x="354.39" y="523" width="8.2" height="9" fill="#ff8080" rx="0" /><rect x="363.46" y="523" width="8.2" height="9" fill="#ffaaaa" rx="0" /><rect x="372.54" y="523" width="8.2" height="9" fill="#ffd5d5" rx="0" /><rect x="381.62" y="523" width="8.2" height="9" fill="#280b0b" rx="0" /><rect x="390.69" y="523" width="8.2" height="9" fill="#501616" rx="0" /><rect x="399.77" y="523" width="8.2" height="9" fill="#782121" rx="0" /><rect x="408.85" y="523" width="8.2" height="9" fill="#a02c2c" rx="0" /><rect x="417.93" y="523" width="8.2" height="9" fill="#c83737" rx="0" /><rect x="427.00" y="523" width="8.2" height="9" fill="#d35f5f" rx="0" /><rect x="436.08" y="523" width="8.2" height="9" fill="#de8787" rx="0" /><rect x="445.16" y="523" width="8.2" height="9" fill="#e9afaf" rx="0" /><rect x="454.23" y="523" width="8.2" height="9" fill="#f4d7d7" rx="0" /><rect x="463.31" y="523" width="8.2" height="9" fill="#241c1c" rx="0" /><rect x="472.39" y="523" width="8.2" height="9" fill="#483737" rx="0" /><rect x="481.46" y="523" width="8.2" height="9" fill="#6c5353" rx="0" /><rect x="490.54" y="523" width="8.2" height="9" fill="#916f6f" rx="0" /><rect x="499.62" y="523" width="8.2" height="9" fill="#ac9393" rx="0" /><rect x="508.70" y="523" width="8.2" height="9" fill="#c8b7b7" rx="0" /><rect x="517.77" y="523" width="8.2" height="9" fill="#e3dbdb" rx="0" /><rect x="526.85" y="523" width="8.2" height="9" fill="#2b1100" rx="0" /><rect x="535.93" y="523" width="8.2" height="9" fill="#552200" rx="0" /><rect x="545.00" y="523" width="8.2" height="9" fill="#803300" rx="0" /><rect x="554.08" y="523" width="8.2" height="9" fill="#aa4400" rx="0" /><rect x="563.16" y="523" width="8.2" height="9" fill="#d45500" rx="0" /><rect x="572.24" y="523" width="8.2" height="9" fill="#ff6600" rx="0" /><rect x="581.31" y="523" width="8.2" height="9" fill="#ff7f2a" rx="0" /><rect x="590.39" y="523" width="8.2" height="9" fill="#ff9955" rx="0" /><rect x="599.47" y="523" width="8.2" height="9" fill="#ffb380" rx="0" /><rect x="608.54" y="523" width="8.2" height="9" fill="#ffccaa" rx="0" /><rect x="617.62" y="523" width="8.2" height="9" fill="#ffe6d5" rx="0" /><rect x="626.70" y="523" width="8.2" height="9" fill="#28170b" rx="0" /><rect x="635.77" y="523" width="8.2" height="9" fill="#502d16" rx="0" /><rect x="644.85" y="523" width="8.2" height="9" fill="#784421" rx="0" /><rect x="653.93" y="523" width="8.2" height="9" fill="#a05a2c" rx="0" /><rect x="663.00" y="523" width="8.2" height="9" fill="#c87137" rx="0" /><rect x="672.08" y="523" width="8.2" height="9" fill="#d38d5f" rx="0" /><rect x="681.16" y="523" width="8.2" height="9" fill="#deaa87" rx="0" /><rect x="690.24" y="523" width="8.2" height="9" fill="#e9c6af" rx="0" /><rect x="699.31" y="523" width="8.2" height="9" fill="#f4e3d7" rx="0" /><rect x="708.39" y="523" width="8.2" height="9" fill="#241f1c" rx="0" /><rect x="717.47" y="523" width="8.2" height="9" fill="#483e37" rx="0" /><rect x="726.54" y="523" width="8.2" height="9" fill="#6c5d53" rx="0" /><rect x="735.62" y="523" width="8.2" height="9" fill="#917c6f" rx="0" /><rect x="744.70" y="523" width="8.2" height="9" fill="#ac9d93" rx="0" /><rect x="753.77" y="523" width="8.2" height="9" fill="#c8beb7" rx="0" /><rect x="762.85" y="523" width="8.2" height="9" fill="#e3dedb" rx="0" /><rect x="771.93" y="523" width="8.2" height="9" fill="#2b2200" rx="0" /><rect x="781.01" y="523" width="8.2" height="9" fill="#554400" rx="0" /><rect x="790.08" y="523" width="8.2" height="9" fill="#806600" rx="0" /><rect x="799.16" y="523" width="8.2" height="9" fill="#aa8800" rx="0" /><rect x="808.24" y="523" width="8.2" height="9" fill="#d4aa00" rx="0" /><rect x="817.31" y="523" width="8.2" height="9" fill="#ffcc00" rx="0" /><rect x="826.39" y="523" width="8.2" height="9" fill="#ffd42a" rx="0" /><rect x="835.47" y="523" width="8.2" height="9" fill="#ffdd55" rx="0" /><rect x="844.54" y="523" width="8.2" height="9" fill="#ffe680" rx="0" /><rect x="853.62" y="523" width="8.2" height="9" fill="#ffeeaa" rx="0" /><rect x="862.70" y="523" width="8.2" height="9" fill="#fff6d5" rx="0" /><rect x="871.78" y="523" width="8.2" height="9" fill="#28220b" rx="0" /><rect x="880.85" y="523" width="8.2" height="9" fill="#504416" rx="0" /><rect x="889.93" y="523" width="8.2" height="9" fill="#786721" rx="0" /><rect x="899.01" y="523" width="8.2" height="9" fill="#a0892c" rx="0" /><rect x="908.08" y="523" width="8.2" height="9" fill="#c8ab37" rx="0" /><rect x="917.16" y="523" width="8.2" height="9" fill="#d3bc5f" rx="0" /><rect x="926.24" y="523" width="8.2" height="9" fill="#decd87" rx="0" /><rect x="935.31" y="523" width="8.2" height="9" fill="#e9ddaf" rx="0" /><rect x="944.39" y="523" width="8.2" height="9" fill="#f4eed7" rx="0" /><rect x="953.47" y="523" width="8.2" height="9" fill="#24221c" rx="0" /><rect x="962.55" y="523" width="8.2" height="9" fill="#484537" rx="0" /><rect x="971.62" y="523" width="8.2" height="9" fill="#6c6753" rx="0" /><rect x="0" y="532" width="1024" height="19" fill="#333333" rx="0" /><text x="20.2" y="540.0" font-size="6.6" fill="#d8d8d8" text-anchor="end" font-weight="normal" textLength="9.2" lengthAdjust="spacingAndGlyphs" >Fill:</text><text x="20.2" y="549.0" font-size="6.6" fill="#d8d8d8" text-anchor="end" font-weight="normal" textLength="19.8" lengthAdjust="spacingAndGlyphs" >Stroke:</text><text x="33.8" y="540.0" font-size="6.8" fill="#f0f0f0" text-anchor="start" font-weight="bold" textLength="16.4" lengthAdjust="spacingAndGlyphs" >Unset</text><text x="33.8" y="549.0" font-size="6.8" fill="#f0f0f0" text-anchor="start" font-weight="bold" textLength="16.4" lengthAdjust="spacingAndGlyphs" >Unset</text><text x="63.2" y="549.0" font-size="6.6" fill="#d8d8d8" text-anchor="start" font-weight="normal" textLength="11" lengthAdjust="spacingAndGlyphs" >1,00</text><text x="78.5" y="544.9" font-size="6.8" fill="#d8d8d8" text-anchor="start" font-weight="normal" textLength="6.4" lengthAdjust="spacingAndGlyphs" >O:</text><rect x="86.4" y="533.6" width="38.1" height="18" fill="#2a2a2a" rx="2.5" stroke="#262626" stroke-width="0.6"/><rect x="106.4" y="534" width="0.6" height="17" fill="#262626" rx="0" /><rect x="115.6" y="534" width="0.6" height="17" fill="#262626" rx="0" /><text x="90" y="544.9" font-size="6.8" fill="#e0e0e0" text-anchor="start" font-weight="normal" textLength="10.2" lengthAdjust="spacingAndGlyphs" >100</text><path d="M108.8,542.2 h5 M117.6,542.2 h5 M120.1,539.7 v5" stroke="#bdbdbd" stroke-width="1"/><path d="M117.6,542.2 h5 M120.1,539.7 v5" stroke="#5a5a5a" stroke-width="1"/><rect x="139.2" y="537" width="1.3" height="9.4" fill="#3f8ae0" rx="0" /><text x="144.2" y="544.9" font-size="6.8" fill="#e0e0e0" text-anchor="start" font-weight="normal" textLength="20.4" lengthAdjust="spacingAndGlyphs" >Layer 1</text><path d="M174.2,542 c2,-3 5.6,-3 7.6,0 c-2,3 -5.6,3 -7.6,0 z" fill="none" stroke="#f0f0f0" stroke-width="0.9"/><circle cx="178" cy="542" r="1.2" fill="#f0f0f0"/><path d="M175,539 l1,1 M181,539 l-1,1" stroke="#f0f0f0" stroke-width="0.7"/><rect x="194.6" y="541.8" width="5" height="4.4" rx="0.5" fill="#f0f0f0"/><path d="M198.4,542 V540.2 a1.5,1.5 0 0 1 3,0 v0.8" fill="none" stroke="#f0f0f0" stroke-width="0.9"/><text x="211.7" y="544.8" font-size="6.8" fill="#e0e0e0" textLength="278" lengthAdjust="spacingAndGlyphs"><tspan font-weight="bold">Image</tspan> 450 × 381: embedded in layer <tspan font-weight="bold">Layer 1</tspan>. Click selection again to toggle scale/rotation handles.</text><text x="869.9" y="540.0" font-size="6.6" fill="#d0d0d0" text-anchor="start" font-weight="normal" textLength="5" lengthAdjust="spacingAndGlyphs" >X:</text><text x="869.9" y="549.0" font-size="6.6" fill="#d0d0d0" text-anchor="start" font-weight="normal" textLength="5" lengthAdjust="spacingAndGlyphs" >Y:</text><text x="899.7" y="540.0" font-size="6.6" fill="#e0e0e0" text-anchor="end" font-weight="normal" textLength="17.2" lengthAdjust="spacingAndGlyphs" >137,63</text><text x="899.7" y="549.0" font-size="6.6" fill="#e0e0e0" text-anchor="end" font-weight="normal" textLength="14" lengthAdjust="spacingAndGlyphs" >22,65</text><text x="904.6" y="544.9" font-size="6.6" fill="#d0d0d0" text-anchor="start" font-weight="normal" textLength="5.2" lengthAdjust="spacingAndGlyphs" >Z:</text><rect x="911" y="532.9" width="45.2" height="18.4" fill="#2a2a2a" rx="2.5" stroke="#262626" stroke-width="0.6"/><rect x="933.6" y="533.2" width="0.6" height="18" fill="#262626" rx="0" /><rect x="945" y="533.2" width="0.6" height="18" fill="#262626" rx="0" /><text x="914.6" y="544.9" font-size="6.6" fill="#e0e0e0" text-anchor="start" font-weight="normal" textLength="15.6" lengthAdjust="spacingAndGlyphs" >290%</text><path d="M936.6,542 h5 M948,542 h5 M950.5,539.5 v5" stroke="#d8d8d8" stroke-width="1"/><text x="962.6" y="544.9" font-size="6.6" fill="#d0d0d0" text-anchor="start" font-weight="normal" textLength="5" lengthAdjust="spacingAndGlyphs" >R:</text><rect x="969" y="532.9" width="48.9" height="18.4" fill="#2a2a2a" rx="2.5" stroke="#262626" stroke-width="0.6"/><rect x="995.6" y="533.2" width="0.6" height="18" fill="#262626" rx="0" /><rect x="1006.8" y="533.2" width="0.6" height="18" fill="#262626" rx="0" /><text x="975" y="544.9" font-size="6.6" fill="#e0e0e0" text-anchor="start" font-weight="normal" textLength="15.8" lengthAdjust="spacingAndGlyphs" >0,00°</text><path d="M998.6,542 h5 M1009.8,542 h5 M1012.3,539.5 v5" stroke="#d8d8d8" stroke-width="1"/><rect x="705" y="48.5" width="12.2" height="10.5" fill="#2f2f2f" rx="2" /><rect x="707.6" y="50.6" width="7" height="4.6" rx="0.6" fill="none" stroke="#e0e0e0" stroke-width="0.8"/><path d="M709.4,56.6 h3.4" stroke="#e0e0e0" stroke-width="0.9"/><rect x="705.4" y="504.2" width="12" height="9" fill="#2f2f2f" rx="2" /><circle cx="711" cy="506.8" r="1.4" fill="none" stroke="#d0d0d0" stroke-width="0.6"/><circle cx="709.4" cy="510.2" r="1.3" fill="#10b030"/><circle cx="712.6" cy="510.2" r="1.3" fill="#e020a0"/><path d="M985.2,524.4 l3,-2.8 l3,2.8 M1001.6,522 l3,2.8 l3,-2.8" stroke="#e8e8e8" stroke-width="1.2" fill="none"/><rect x="1013.8" y="517.6" width="9.4" height="14.2" fill="#333333" rx="2.2" stroke="#262626" stroke-width="0.7"/><path d="M1015.4,522.4 h6.2 M1015.4,524.9 h6.2 M1015.4,527.4 h6.2" stroke="#e8e8e8" stroke-width="1"/><path d="M283.90,179.10 L349.90,110.50 C363.00,112.00 386.00,124.00 400.00,136.30 C402.50,138.20 404.50,138.40 407.00,139.00 C444.00,146.00 457.00,170.00 457.40,205.00 L457.70,240.90 C448.00,242.00 438.00,242.20 428.60,242.40 C430.18,243.05 434.23,245.12 438.10,246.30 C441.97,247.48 446.48,248.83 451.80,249.50 C457.12,250.17 463.97,250.35 470.00,250.30 C476.03,250.25 482.50,249.70 488.00,249.20 C493.50,248.70 497.98,248.18 503.00,247.30 C508.02,246.42 515.58,244.47 518.10,243.90 C515.75,245.78 509.07,252.03 504.00,255.20 C498.93,258.37 493.15,260.90 487.70,262.90 C482.25,264.90 476.12,266.12 471.30,267.20 C466.48,268.28 460.88,269.03 458.80,269.40 L459.60,299.00 C460.60,300.50 462.48,305.03 465.60,308.00 C468.72,310.97 473.65,315.12 478.30,316.80 C482.95,318.48 489.27,318.20 493.50,318.10 C497.73,318.00 500.73,317.47 503.70,316.20 C506.67,314.93 509.82,313.37 511.30,310.50 C512.78,307.63 512.82,302.38 512.60,299.00 C512.38,295.62 511.70,292.63 510.00,290.20 C508.30,287.77 503.67,285.37 502.40,284.40 C500.88,285.00 497.68,287.50 495.30,289.00 C492.92,290.50 490.07,292.80 487.70,293.20 C485.33,293.60 482.73,292.62 481.10,291.40 C479.47,290.18 478.53,287.75 477.90,285.90 C477.27,284.05 477.03,282.15 477.30,280.30 C477.57,278.45 478.32,276.62 479.50,274.80 C480.68,272.98 482.50,271.03 484.40,269.40 C486.30,267.77 488.55,266.18 490.90,265.00 C493.25,263.82 495.95,262.72 498.50,262.30 C501.05,261.88 503.65,262.05 506.20,262.50 C508.75,262.95 510.67,263.30 513.80,265.00 C516.93,266.70 521.97,269.20 525.00,272.70 C528.03,276.20 530.37,280.97 532.00,286.00 C533.63,291.03 534.87,297.13 534.80,302.90 C534.73,308.67 534.25,315.32 531.60,320.60 C528.95,325.88 524.18,331.00 518.90,334.60 C513.62,338.20 506.25,340.70 499.90,342.20 C493.55,343.70 487.50,344.03 480.80,343.60 C474.10,343.17 465.75,341.95 459.70,339.60 C453.65,337.25 448.73,332.67 444.50,329.50 C440.27,326.33 437.05,323.78 434.30,320.60 C431.55,317.42 429.70,314.22 428.00,310.40 C426.30,306.58 425.38,301.93 424.10,297.70 C422.82,293.47 422.32,289.70 420.30,285.00 C418.28,280.30 415.08,274.00 412.00,269.50 C408.92,265.00 405.63,261.50 401.80,258.00 C397.97,254.50 394.30,251.88 389.00,248.50 C383.70,245.12 379.10,242.80 370.00,237.70 C360.90,232.60 345.77,224.83 334.40,217.90 C323.03,210.97 310.22,202.57 301.80,196.10 C293.38,189.63 286.88,181.93 283.90,179.10 Z" fill="#000"/><path d="M293.50,217.50 C300.32,221.20 321.82,232.87 334.40,239.70 C346.98,246.53 359.43,252.45 369.00,258.50 C378.57,264.55 386.18,270.00 391.80,276.00 C397.42,282.00 400.00,286.00 402.70,294.50 C405.40,303.00 406.32,317.58 408.00,327.00 C409.68,336.42 412.00,347.00 412.80,351.00 L218.70,350.80 L253.00,333.50 C250.00,290.00 252.00,255.00 293.50,217.50 Z" fill="#000"/><path d="M302.70,288.70 C306.63,289.22 319.63,289.32 326.30,291.80 C332.97,294.28 338.47,298.30 342.70,303.60 C346.93,308.90 349.58,315.70 351.70,323.60 C353.82,331.50 354.75,346.10 355.40,351.00 C356.05,355.90 355.57,352.67 355.60,353.00 L341.80,353.00 L341.80,351.00 C341.80,348.55 342.87,341.80 341.80,336.30 C340.73,330.80 338.58,324.05 335.40,318.00 C332.22,311.95 328.15,304.88 322.70,300.00 C317.25,295.12 306.03,290.58 302.70,288.70 Z" fill="#fff"/><circle cx="419.4" cy="194.2" r="6.2" fill="#fff"/><path fill-rule="evenodd" fill="#000" d="M217.7,365.7 L253.4,365.7 L253.4,375.3 L230,375.3 L230,383.7 L251.8,383.7 L251.8,393.2 L230,393.2 L230,406.3 L253.4,406.3 L253.4,416.1 L217.7,416.1 Z M262.1,365.7 L274.6,365.7 L274.6,406.3 L298.2,406.3 L298.2,416.1 L262.1,416.1 Z M304.3,365.7 L316.8,365.7 L316.8,406.3 L340.3,406.3 L340.3,416.1 L304.3,416.1 Z M340.8,365.7 L354.7,365.7 L365.5,383.6 L376.3,365.7 L389.9,365.7 L372.1,395.6 L372.1,416.1 L359.1,416.1 L359.1,395.6 Z M394.7,365.7 L430.9,365.7 L430.9,375.3 L408,375.3 L408,384.5 L429.2,384.5 L429.2,394.6 L408,394.6 L408,416.1 L394.7,416.1 Z M432.4,416.1 L451,365.7 L465.6,365.7 L483.4,416.1 L470.1,416.1 L466.9,405.8 L448.5,405.8 L444.7,416.1 Z M457.4,380.4 L451,396.3 L463.7,396.3 Z M489.1,365.7 L504.6,365.7 L522.6,393.2 L522.6,365.7 L534.2,365.7 L534.2,416.1 L521.5,416.1 L501.1,383.5 L501.1,416.1 L489.1,416.1 Z"/><rect x="171.3" y="94.5" width="401" height="340.3" fill="none" stroke="#8c8cf0" stroke-width="0.8" stroke-dasharray="2,2"/><g transform="translate(168.2,91.2) rotate(0)"><path d="M-2.6,2.2 C-2.6,-0.4 -0.4,-2.6 2.2,-2.6" fill="none" stroke="#000000" stroke-width="1.9"/><path d="M1.4,-4.3 L3.9,-2.6 L1.4,-0.9 Z" fill="#000000"/><path d="M-4.3,1.4 L-2.6,3.9 L-0.9,1.4 Z" fill="#000000"/></g><g transform="translate(575.6,91.2) rotate(90)"><path d="M-2.6,2.2 C-2.6,-0.4 -0.4,-2.6 2.2,-2.6" fill="none" stroke="#000000" stroke-width="1.9"/><path d="M1.4,-4.3 L3.9,-2.6 L1.4,-0.9 Z" fill="#000000"/><path d="M-4.3,1.4 L-2.6,3.9 L-0.9,1.4 Z" fill="#000000"/></g><g transform="translate(575.6,438.4) rotate(180)"><path d="M-2.6,2.2 C-2.6,-0.4 -0.4,-2.6 2.2,-2.6" fill="none" stroke="#000000" stroke-width="1.9"/><path d="M1.4,-4.3 L3.9,-2.6 L1.4,-0.9 Z" fill="#000000"/><path d="M-4.3,1.4 L-2.6,3.9 L-0.9,1.4 Z" fill="#000000"/></g><g transform="translate(168.2,438.4) rotate(270)"><path d="M-2.6,2.2 C-2.6,-0.4 -0.4,-2.6 2.2,-2.6" fill="none" stroke="#000000" stroke-width="1.9"/><path d="M1.4,-4.3 L3.9,-2.6 L1.4,-0.9 Z" fill="#000000"/><path d="M-4.3,1.4 L-2.6,3.9 L-0.9,1.4 Z" fill="#000000"/></g><path d="M368.2,90.2 L370.4,88.2 V89.5 H374.0 V88.2 L376.2,90.2 L374.0,92.2 V90.9 H370.4 V92.2 Z" fill="#000000" stroke="#000000" stroke-width="0.4"/><path d="M368.2,439 L370.4,437 V438.3 H374.0 V437 L376.2,439 L374.0,441 V439.7 H370.4 V441 Z" fill="#000000" stroke="#000000" stroke-width="0.4"/><path d="M166.7,261 L164.7,263.2 H166.0 V266.8 H164.7 L166.7,269 L168.7,266.8 H167.39999999999998 V263.2 H168.7 Z" fill="#000000" stroke="#000000" stroke-width="0.4"/><path d="M577.3,261 L575.3,263.2 H576.5999999999999 V266.8 H575.3 L577.3,269 L579.3,266.8 H578.0 V263.2 H579.3 Z" fill="#000000" stroke="#000000" stroke-width="0.4"/><path d="M372.1,260.4 Q373.0,264.1 376.70000000000005,265.0 Q373.0,265.9 372.1,269.6 Q371.20000000000005,265.9 367.5,265.0 Q371.20000000000005,264.1 372.1,260.4 Z" fill="#ffffff" stroke="#ffffff" stroke-width="1.2" stroke-linejoin="round"/><circle cx="372.1" cy="265.0" r="1.3" fill="#000"/></svg></body></html>
